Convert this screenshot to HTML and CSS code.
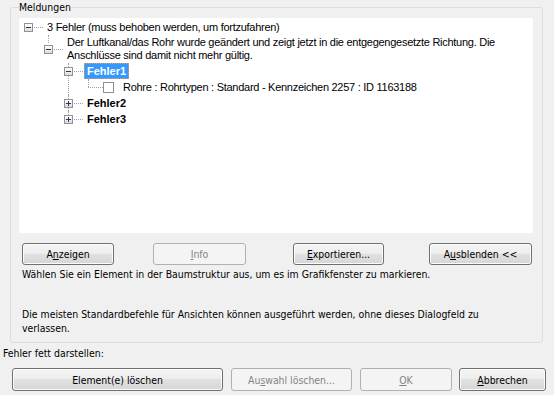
FILE: index.html
```html
<!DOCTYPE html>
<html lang="de">
  <head>
    <meta charset="UTF-8" />
    <meta name="viewport" content="width=device-width, initial-scale=1.0" />
    <title>Fehler</title>
    <link rel="stylesheet" href="styles.css">
  </head>

  <body>
    <div class="dialog">
      <fieldset class="group">
        <legend>Meldungen</legend>
        <div class="tree">
          <ul class="nodes root">
            <li>
              <div class="row"><span class="exp open"></span><span class="label">3 Fehler (muss behoben werden, um fortzufahren)</span></div>
              <ul class="nodes">
                <li>
                  <div class="row tall"><span class="exp open"></span><span class="label">Der Luftkanal/das Rohr wurde geändert und zeigt jetzt in die entgegengesetzte Richtung. Die<br>Anschlüsse sind damit nicht mehr gültig.</span></div>
                  <ul class="nodes">
                    <li>
                      <div class="row"><span class="exp open"></span><span class="label bold selected">Fehler1</span></div>
                      <ul class="nodes">
                        <li>
                          <div class="row"><span class="check"></span><span class="label">Rohre : Rohrtypen : Standard - Kennzeichen 2257 : ID 1163188</span></div>
                        </li>
                      </ul>
                    </li>
                    <li>
                      <div class="row"><span class="exp"></span><span class="label bold">Fehler2</span></div>
                    </li>
                    <li>
                      <div class="row"><span class="exp"></span><span class="label bold">Fehler3</span></div>
                    </li>
                  </ul>
                </li>
              </ul>
            </li>
          </ul>
        </div>

        <div class="actions">
          <button class="btn show">A<u>n</u>zeigen</button>
          <button class="btn info" disabled><u>I</u>nfo</button>
          <button class="btn export"><u>E</u>xportieren...</button>
          <button class="btn hide">A<u>u</u>sblenden &lt;&lt;</button>
        </div>

        <p class="hint">Wählen Sie ein Element in der Baumstruktur aus, um es im Grafikfenster zu markieren.</p>
        <p class="hint note">Die meisten Standardbefehle für Ansichten können ausgeführt werden, ohne dieses Dialogfeld zu<br>verlassen.</p>
      </fieldset>

      <p class="caption">Fehler fett darstellen:</p>

      <div class="footer">
        <button class="btn delete">Element(e) löschen</button>
        <button class="btn delsel" disabled>Au<u>s</u>wahl löschen...</button>
        <button class="btn ok" disabled><u>O</u>K</button>
        <button class="btn cancel"><u>A</u>bbrechen</button>
      </div>
    </div>
  </body>
</html>
```

FILE: styles.css
```css
body {
  margin: 0;
  background-color: #f0f0f0;
  font-family: "DejaVu Sans Condensed", "DejaVu Sans", sans-serif;
  font-size: 10.4px;
  color: #000000;
}

.dialog {
  width: 554px;
  height: 395px;
  overflow: hidden;
}

/* group box */

.group {
  margin: 1px 11px 0 10px;
  padding: 0 9px 7px 8px;
  border: 1px solid #d5dfe5;
  border-radius: 3px;
}

.group legend {
  padding: 0;
  line-height: 13px;
}

/* tree view */

.tree {
  margin-top: 4px;
  height: 215px;
  padding-top: 1px;
  box-sizing: border-box;
  background-color: #ffffff;
  font-family: "Liberation Sans", Arial, sans-serif;
  font-size: 11px;
  letter-spacing: -0.27px;
}

.tree ul {
  list-style: none;
  margin: 0;
  padding: 0;
}

.tree .root {
  padding-left: 5px;
}

.tree .nodes .nodes {
  padding-left: 20px;
}

.tree .nodes .nodes > li {
  position: relative;
}

.tree .nodes .nodes > li::before {
  content: "";
  position: absolute;
  left: 4px;
  top: 0;
  bottom: 0;
  border-left: 1px dotted #a0a0a0;
}

.tree .nodes .nodes > li:last-child::before {
  bottom: auto;
  height: 8px;
}

.row {
  position: relative;
  display: flex;
  align-items: center;
  height: 16px;
}

.row.tall {
  height: 28px;
}

.row::before {
  content: "";
  position: absolute;
  left: 4px;
  top: 50%;
  width: 15px;
  border-top: 1px dotted #a0a0a0;
}

.exp {
  position: relative;
  z-index: 1;
  flex: none;
  width: 9px;
  height: 9px;
  box-sizing: border-box;
  margin-right: 11px;
  border: 1px solid #919191;
  background: linear-gradient(#ffffff, #dcdcdc);
}

.exp::before {
  content: "";
  position: absolute;
  left: 1px;
  top: 3px;
  width: 5px;
  height: 1px;
  background-color: #1e395b;
}

.exp:not(.open)::after {
  content: "";
  position: absolute;
  left: 3px;
  top: 1px;
  width: 1px;
  height: 5px;
  background-color: #1e395b;
}

.check {
  position: relative;
  z-index: 1;
  flex: none;
  width: 11px;
  height: 11px;
  box-sizing: border-box;
  margin-left: 19px;
  margin-right: 6px;
  border: 1px solid #8f8f8f;
  background-color: #ffffff;
}

.label {
  padding: 0 2px;
  line-height: 14px;
  border: 1px solid transparent;
  white-space: nowrap;
}

.tall .label {
  line-height: 13px;
}

.bold {
  font-weight: bold;
  letter-spacing: 0;
}

.selected {
  background-color: #3399ff;
  color: #ffffff;
  border: 1px dotted #e8a050;
}

/* buttons */

.btn {
  box-sizing: border-box;
  height: 22px;
  padding: 0;
  border: 1px solid #707070;
  border-radius: 3px;
  background: linear-gradient(#f4f4f4 0%, #ededed 50%, #e1e1e1 50%, #d6d6d6 100%);
  box-shadow: inset 0 0 0 1px #fbfbfb;
  font-family: inherit;
  font-size: inherit;
  color: #000000;
  text-align: center;
}

.btn:disabled {
  border-color: #adb2b5;
  background: #f4f4f4;
  box-shadow: none;
  color: #838383;
}

.actions {
  display: flex;
  margin-top: 10px;
}

.show {
  margin-left: 3px;
  width: 92px;
}

.info {
  margin-left: 39px;
  width: 93px;
}

.export {
  margin-left: 47px;
  width: 91px;
}

.hide {
  margin-left: 45px;
  width: 103px;
}

.hint {
  margin: 2px 0 0 3px;
  line-height: 14px;
}

.hint.note {
  margin-top: 26px;
}

.caption {
  margin: 3px 0 0 3px;
  line-height: 14px;
}

.footer {
  display: flex;
  margin-top: 8px;
}

.footer .btn {
  height: 23px;
}

.delete {
  margin-left: 12px;
  width: 211px;
}

.delsel {
  margin-left: 8px;
  width: 121px;
}

.ok {
  margin-left: 8px;
  width: 92px;
}

.cancel {
  margin-left: 7px;
  width: 87px;
}
```
